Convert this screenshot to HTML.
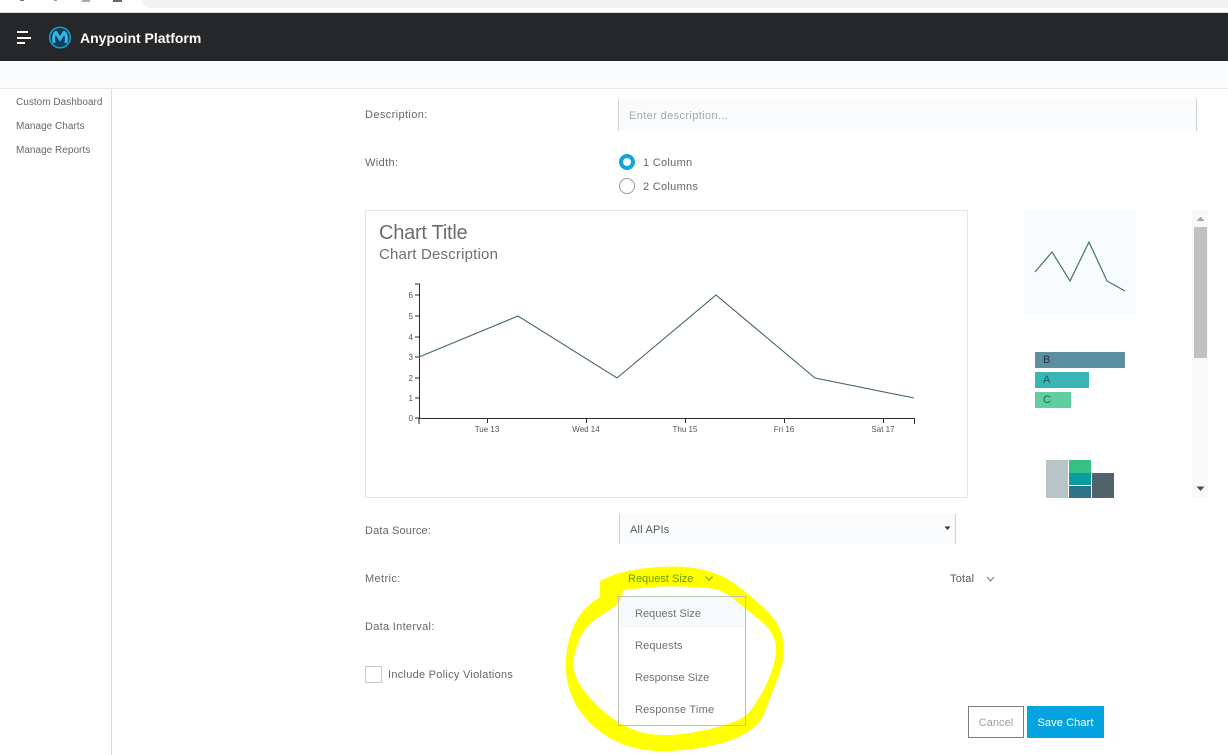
<!DOCTYPE html>
<html><head><meta charset="utf-8"><style>
html,body{margin:0;padding:0;background:#fff;width:1228px;height:755px;overflow:hidden}
body{position:relative;font-family:"Liberation Sans",sans-serif}
.a{position:absolute}
.t{position:absolute;font-size:11px;line-height:14px;color:#63686c;white-space:nowrap;letter-spacing:.38px}
.s{font-size:10px;letter-spacing:.02px}
svg{position:absolute;left:0;top:0}
svg text{font-family:"Liberation Sans",sans-serif}
</style></head><body>
<div class="a" style="left:142px;top:0;width:1086px;height:8px;background:#f1f3f4;border-bottom-left-radius:10px"></div>
<div class="a" style="left:20px;top:0;width:4px;height:1px;background:#777"></div>
<div class="a" style="left:54px;top:0;width:3px;height:1px;background:#999"></div>
<div class="a" style="left:82px;top:0;width:8px;height:2px;background:#aaa"></div>
<div class="a" style="left:113px;top:0;width:9px;height:2px;background:#666"></div>
<div class="a" style="left:0;top:12px;width:1228px;height:1px;background:#dadce0"></div>
<div class="a" style="left:0;top:13px;width:1228px;height:48px;background:#262728"></div>
<div class="a" style="left:0;top:61px;width:1228px;height:27px;background:#fbfcfe"></div>
<div class="a" style="left:0;top:88px;width:1228px;height:1px;background:#e9e9e9"></div>
<div class="a" style="left:111px;top:89px;width:1px;height:666px;background:#dcdcdc"></div>

<div class="a" style="left:17px;top:31px;width:11px;height:1.500px;background:#fff"></div>
<div class="a" style="left:17px;top:37px;width:14px;height:1.500px;background:#fff"></div>
<div class="a" style="left:17px;top:42px;width:8px;height:1.500px;background:#fff"></div>

<div class="t" style="left:80px;top:29px;font-size:14px;line-height:18px;font-weight:bold;color:#fff;letter-spacing:0">Anypoint Platform</div>

<div class="t s" style="left:16px;top:96px">Custom Dashboard</div>
<div class="t s" style="left:16px;top:120px">Manage Charts</div>
<div class="t s" style="left:16px;top:144px">Manage Reports</div>

<div class="t" style="left:365px;top:108px">Description:</div>
<div class="a" style="left:618px;top:99px;width:578px;height:32px;background:#fafbfd"></div>
<div class="a" style="left:618px;top:99px;width:1px;height:32px;background:#cfd2d4"></div>
<div class="a" style="left:1196px;top:99px;width:1px;height:32px;background:#cfd2d4"></div>
<div class="t" style="left:629px;top:109px;color:#a3a8ac">Enter description...</div>

<div class="t" style="left:365px;top:156px">Width:</div>
<div class="t" style="left:643px;top:156px;letter-spacing:.3px">1 Column</div>
<div class="t" style="left:643px;top:180px;letter-spacing:.3px">2 Columns</div>

<div class="a" style="left:365px;top:210px;width:601px;height:286px;border:1px solid #e4e4e4"></div>
<div class="t" style="left:379px;top:222px;font-size:20px;line-height:23px;color:#6a6e70;letter-spacing:-.25px">Chart Title</div>
<div class="t" style="left:379px;top:246px;font-size:15px;line-height:18px;color:#6c7072;letter-spacing:.19px">Chart Description</div>

<div class="a" style="left:1024px;top:210px;width:112px;height:104px;background:#f8fcfe"></div>
<div class="a" style="left:1035px;top:352px;width:90px;height:16px;background:#5c8f9f"></div>
<div class="a" style="left:1035px;top:372px;width:54px;height:16px;background:#3bb5b3"></div>
<div class="a" style="left:1035px;top:392px;width:36px;height:16px;background:#60cda3"></div>
<div class="t" style="left:1043px;top:353px;color:#234;">B</div>
<div class="t" style="left:1043px;top:373px;color:#1b5a66">A</div>
<div class="t" style="left:1043px;top:393px;color:#1c6a50">C</div>
<div class="a" style="left:1046px;top:460px;width:22px;height:38px;background:#b9c4c8"></div>
<div class="a" style="left:1069px;top:460px;width:22px;height:13px;background:#36c184"></div>
<div class="a" style="left:1069px;top:473px;width:22px;height:12px;background:#0b9ca0"></div>
<div class="a" style="left:1069px;top:486px;width:22px;height:12px;background:#2f7289"></div>
<div class="a" style="left:1092px;top:473px;width:22px;height:25px;background:#4f646b"></div>

<div class="a" style="left:1192px;top:210px;width:16px;height:287px;background:#f9f9f9"></div>
<div class="a" style="left:1194px;top:227px;width:13px;height:131px;background:#c1c1c1"></div>

<div class="t" style="left:365px;top:524px;letter-spacing:.15px">Data Source:</div>
<div class="a" style="left:619px;top:514px;width:336px;height:30px;background:#fafbfd"></div>
<div class="a" style="left:619px;top:514px;width:1px;height:30px;background:#cfd2d4"></div>
<div class="a" style="left:955px;top:514px;width:1px;height:30px;background:#cfd2d4"></div>
<div class="t" style="left:630px;top:523px;color:#55595c;letter-spacing:.2px">All APIs</div>

<div class="t" style="left:365px;top:572px">Metric:</div>
<div class="t" style="left:365px;top:620px;letter-spacing:.3px">Data Interval:</div>
<div class="a" style="left:365px;top:666px;width:15px;height:15px;border:1px solid #c8c8c8"></div>
<div class="t" style="left:388px;top:668px;letter-spacing:.27px">Include Policy Violations</div>
<div class="t" style="left:950px;top:572px;color:#55595c;letter-spacing:.2px">Total</div>

<div class="a" style="left:619px;top:597px;width:126px;height:31px;background:#f6fafd"></div>

<svg width="1228" height="755" viewBox="0 0 1228 755">
  <!-- radios -->
  <circle cx="627" cy="162" r="6" fill="#fff" stroke="#10a5dc" stroke-width="4"/>
  <circle cx="627" cy="186" r="7.500" fill="#fff" stroke="#9a9a9a" stroke-width="1"/>
  <!-- chart -->
  <g stroke="#2b2b2b" stroke-width="1" fill="none" shape-rendering="crispEdges">
    <path d="M415 284H419.500V418M415 295h4M415 316h4M415 337h4M415 357h4M415 378h4M415 398h4M415 418h4"/>
    <path d="M419 424V418.500H914.500V424M487.500 418v5M586.500 418v5M685.500 418v5M784.500 418v5M883.500 418v5"/>
  </g>
  <path d="M419 357L518 316L617 378L716 295L815 378L914 398" fill="none" stroke="#47666e" stroke-width="1.100"/>
  <g font-size="8" fill="#555" text-anchor="end">
    <text x="413" y="298">6</text><text x="413" y="319">5</text><text x="413" y="340">4</text><text x="413" y="360">3</text><text x="413" y="381">2</text><text x="413" y="401">1</text><text x="413" y="421">0</text>
  </g>
  <g font-size="8" fill="#555" text-anchor="middle">
    <text x="487" y="432">Tue 13</text><text x="586" y="432">Wed 14</text><text x="685" y="432">Thu 15</text><text x="784" y="432">Fri 16</text><text x="883" y="432">Sat 17</text>
  </g>
  <!-- thumb line -->
  <path d="M1035 272L1052 252L1070 281L1089 242L1107 281L1125 291" fill="none" stroke="#47707c" stroke-width="1.200"/>
  <!-- scrollbar arrows -->
  <path d="M1196.500 221L1200.500 216.500L1204.500 221Z" fill="#a8a8a8"/>
  <path d="M1196.500 486.500L1204.500 486.500L1200.500 491Z" fill="#505050"/>
  <!-- select caret -->
  <path d="M944.500 526.500H950.500L947.500 530Z" fill="#333"/>
  <!-- total chevron -->
  <path d="M987 577L990.500 581L994 577" fill="none" stroke="#777" stroke-width="1"/>
  <!-- logo -->
  <circle cx="60" cy="37.500" r="10.300" fill="#0d3f56" stroke="#13a0d0" stroke-width="1.500"/>
  <path d="M54 43C53 36.500 54.500 32.500 56 32.500L60 39L64 32.500C65.500 32.500 67 36.500 66 43" fill="none" stroke="#39b6e8" stroke-width="3"/>
  <!-- yellow highlight -->
  <path fill-rule="evenodd" fill="#ffff00" d="M600 581L608.500 577Q617 573 633.500 570Q650 567 670 566.500Q690 566 706.500 570.500Q723 575 736.500 585Q750 595 763.500 607.500Q777 620 781 632.500Q785 645 783.500 656.500Q782 668 776 683Q770 698 765 711.500Q760 725 745 733.500Q730 742 710 746Q690 750 670 751Q650 752 631.500 747Q613 742 598 730Q583 718 575 703Q567 688 566 671.500Q565 655 569 640Q573 625 580 615Q587 605 600 597Z
  M623 590L641 588Q660 586 680 586.500Q700 587 711.500 588.500Q723 590 735 600Q747 610 758.500 619Q770 628 774 638Q778 648 774 663Q770 678 763.500 690Q757 702 751 710Q745 718 731 723Q717 728 692 732.500Q667 737 647 733.500Q627 730 606 713.500Q590 700 580 685Q570 668 575 652.500Q578 640 584 631Q590 622 604 613.500Q618 605 620 601L622 597Z"/>
  <!-- dropdown border -->
  <rect x="618.500" y="596.500" width="127" height="129" fill="none" stroke="#c0c0b4" stroke-width="1"/>
  <!-- request chevron -->
  <path d="M705.500 576.500L709 580.500L712.500 576.500" fill="none" stroke="#7d9a20" stroke-width="1"/>
</svg>

<div class="t" style="left:628px;top:572px;color:#6a9a00;letter-spacing:0">Request Size</div>
<div class="t" style="left:635px;top:607px;color:#6d7276;letter-spacing:.05px">Request Size</div>
<div class="t" style="left:635px;top:639px;color:#6d7276;letter-spacing:.15px">Requests</div>
<div class="t" style="left:635px;top:671px;color:#6d7276;letter-spacing:.02px">Response Size</div>
<div class="t" style="left:635px;top:703px;color:#6d7276;letter-spacing:.22px">Response Time</div>

<div class="a" style="left:968px;top:706px;width:54px;height:30px;border:1px solid #7d7d7d"></div>
<div class="t" style="left:968px;top:716px;width:56px;text-align:center;color:#9aa0a4;letter-spacing:.05px">Cancel</div>
<div class="a" style="left:1027px;top:706px;width:77px;height:32px;background:#05a3e0"></div>
<div class="t" style="left:1027px;top:716px;width:77px;text-align:center;color:#fff;letter-spacing:.1px">Save Chart</div>
</body></html>
